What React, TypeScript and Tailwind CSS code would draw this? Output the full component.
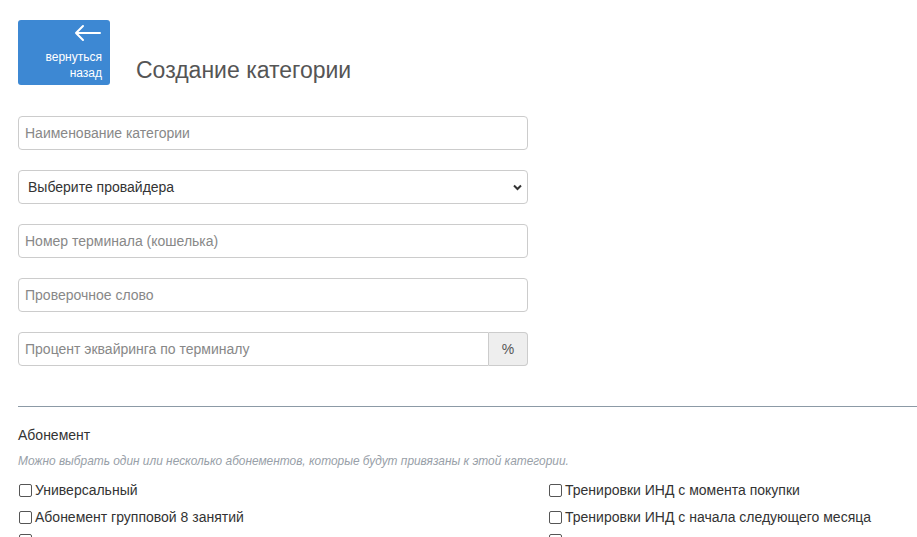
import React from "react"

const fields = [
  "Номер терминала (кошелька)",
  "Проверочное слово",
]

const leftSubs = ["Универсальный", "Абонемент групповой 8 занятий"]
const rightSubs = [
  "Тренировки ИНД с момента покупки",
  "Тренировки ИНД с начала следующего месяца",
]

function Box() {
  return <span className="w-[13px] h-[13px] border border-[#555] rounded-[2px] bg-white shrink-0" />
}

function Check({ label }: { label: string }) {
  return (
    <label className="flex items-center gap-[3px] h-[27px] text-[14px] text-[#333]">
      <Box />
      <span>{label}</span>
    </label>
  )
}

export default function App() {
  return (
    <div
      className="w-[917px] h-[537px] overflow-hidden bg-white pl-[18px] pt-[20px]"
      style={{ fontFamily: '"Liberation Sans", Arial, sans-serif' }}
    >
      {/* Header */}
      <div className="flex items-end">
        <button className="w-[92px] h-[65px] bg-[#3d88d3] rounded-[3px] flex flex-col items-end pr-[8px] pt-[4px] text-white">
          <svg width="28" height="18" viewBox="0 0 28 18" fill="none" stroke="white" strokeWidth="2" strokeLinecap="round" strokeLinejoin="round">
            <path d="M26 9H2M9 2L2 9l7 7" />
          </svg>
          <span className="text-[12px] leading-[16px] text-right mt-[7px]">
            вернуться
            <br />
            назад
          </span>
        </button>
        <h1 className="ml-[26px] text-[23px] leading-none text-[#555] mb-[3px]">Создание категории</h1>
      </div>

      {/* Form */}
      <div className="w-[510px] mt-[31px] flex flex-col gap-[20px]">
        <input
          className="h-[34px] border border-[#ccc] rounded-[4px] px-[6px] text-[14px] placeholder:text-[#888] outline-none"
          placeholder="Наименование категории"
        />
        <div className="relative h-[34px] border border-[#ccc] rounded-[4px] flex items-center px-[9px] text-[14px] text-[#333]">
          Выберите провайдера
          <svg className="absolute right-[5px] top-[13px]" width="9" height="7" viewBox="0 0 9 7" fill="none" stroke="#333" strokeWidth="2">
            <path d="M1 1.5l3.5 3.5L8 1.5" />
          </svg>
        </div>
        {fields.map((f) => (
          <input
            key={f}
            className="h-[34px] border border-[#ccc] rounded-[4px] px-[6px] text-[14px] placeholder:text-[#888] outline-none"
            placeholder={f}
          />
        ))}
        <div className="flex h-[34px]">
          <input
            className="flex-1 border border-[#ccc] rounded-l-[4px] px-[6px] text-[14px] placeholder:text-[#888] outline-none"
            placeholder="Процент эквайринга по терминалу"
          />
          <span className="w-[39px] border border-l-0 border-[#ccc] bg-[#eee] rounded-r-[4px] flex items-center justify-center text-[14px] text-[#555]">
            %
          </span>
        </div>
      </div>

      <hr className="mt-[40px] border-0 border-t border-[#8c9aa6]" />

      <div className="mt-[20px] text-[14px] text-[#333] leading-[16px]">Абонемент</div>
      <div className="mt-[11px] text-[11.9px] italic text-[#98a0a8] leading-[14px]">
        Можно выбрать один или несколько абонементов, которые будут привязаны к этой категории.
      </div>

      <div className="mt-[9px] grid grid-cols-[530px_530px] pl-[1px]">
        <div className="flex flex-col">
          {leftSubs.map((s) => (
            <Check key={s} label={s} />
          ))}
          <div className="flex items-start h-[27px] pt-[3px]">
            <Box />
          </div>
        </div>
        <div className="flex flex-col">
          {rightSubs.map((s) => (
            <Check key={s} label={s} />
          ))}
          <div className="flex items-start h-[27px] pt-[3px]">
            <Box />
          </div>
        </div>
      </div>
    </div>
  )
}
